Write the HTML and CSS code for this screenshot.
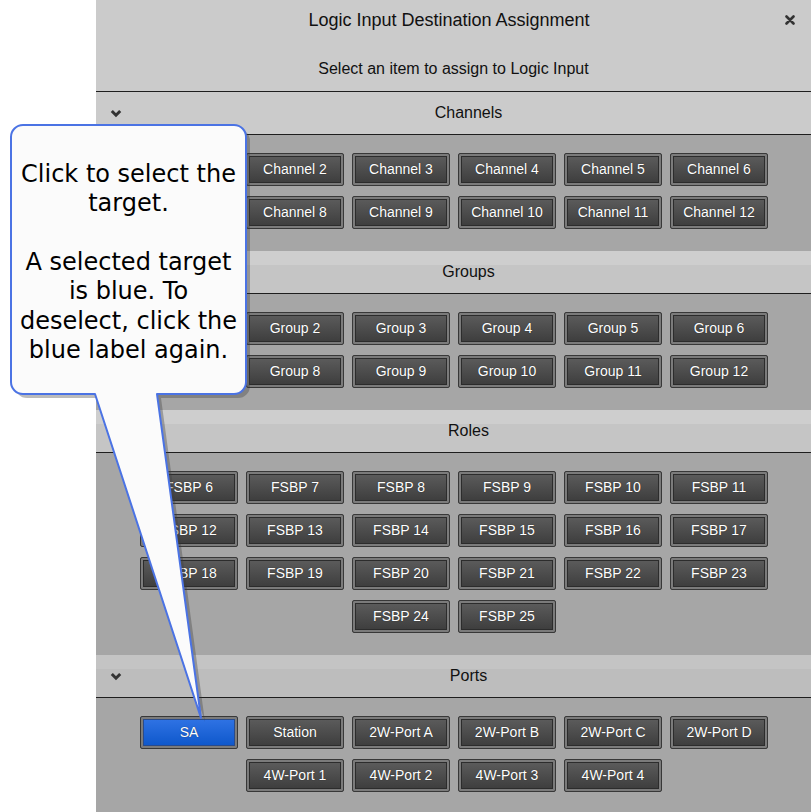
FILE: index.html
```html
<!DOCTYPE html>
<html>
<head>
<meta charset="utf-8">
<link rel="stylesheet" href="styles.css">
</head>
<body>
<div class="page">
  <div class="panel">
    <div class="top">
      <div class="title-row">
        <div class="title">Logic Input Destination Assignment</div>
        <svg class="close" width="10" height="10" viewBox="0 0 10 10"><path d="M1.5 1.5 L8.5 8.5 M8.5 1.5 L1.5 8.5" stroke="#333" stroke-width="2.6" stroke-linecap="round"/></svg>
      </div>
      <div class="subtitle">Select an item to assign to Logic Input</div>
    </div>

    <div class="section">
      <div class="sec-head sec-head-first">
        <span class="chev"><svg width="12" height="9" viewBox="0 0 12 9"><path d="M1.8 2 L6 6.2 L10.2 2" fill="none" stroke="#333" stroke-width="3"/></svg></span>
        <span class="sec-label">Channels</span>
      </div>
      <div class="sec-body">
        <div class="btn">Channel 1</div><div class="btn">Channel 2</div><div class="btn">Channel 3</div><div class="btn">Channel 4</div><div class="btn">Channel 5</div><div class="btn">Channel 6</div>
        <div class="btn">Channel 7</div><div class="btn">Channel 8</div><div class="btn">Channel 9</div><div class="btn">Channel 10</div><div class="btn">Channel 11</div><div class="btn">Channel 12</div>
      </div>
    </div>

    <div class="section">
      <div class="sec-head">
        <span class="chev"><svg width="12" height="9" viewBox="0 0 12 9"><path d="M1.8 2 L6 6.2 L10.2 2" fill="none" stroke="#333" stroke-width="3"/></svg></span>
        <span class="sec-label">Groups</span>
      </div>
      <div class="sec-body">
        <div class="btn">Group 1</div><div class="btn">Group 2</div><div class="btn">Group 3</div><div class="btn">Group 4</div><div class="btn">Group 5</div><div class="btn">Group 6</div>
        <div class="btn">Group 7</div><div class="btn">Group 8</div><div class="btn">Group 9</div><div class="btn">Group 10</div><div class="btn">Group 11</div><div class="btn">Group 12</div>
      </div>
    </div>

    <div class="section">
      <div class="sec-head">
        <span class="chev"><svg width="12" height="9" viewBox="0 0 12 9"><path d="M1.8 2 L6 6.2 L10.2 2" fill="none" stroke="#333" stroke-width="3"/></svg></span>
        <span class="sec-label">Roles</span>
      </div>
      <div class="sec-body">
        <div class="btn">FSBP 6</div><div class="btn">FSBP 7</div><div class="btn">FSBP 8</div><div class="btn">FSBP 9</div><div class="btn">FSBP 10</div><div class="btn">FSBP 11</div>
        <div class="btn">FSBP 12</div><div class="btn">FSBP 13</div><div class="btn">FSBP 14</div><div class="btn">FSBP 15</div><div class="btn">FSBP 16</div><div class="btn">FSBP 17</div>
        <div class="btn">FSBP 18</div><div class="btn">FSBP 19</div><div class="btn">FSBP 20</div><div class="btn">FSBP 21</div><div class="btn">FSBP 22</div><div class="btn">FSBP 23</div>
        <div class="btn">FSBP 24</div><div class="btn">FSBP 25</div>
      </div>
    </div>

    <div class="section">
      <div class="sec-head sec-head-dark">
        <span class="chev"><svg width="12" height="9" viewBox="0 0 12 9"><path d="M1.8 2 L6 6.2 L10.2 2" fill="none" stroke="#333" stroke-width="3"/></svg></span>
        <span class="sec-label">Ports</span>
      </div>
      <div class="sec-body sec-body-last">
        <div class="btn btn-selected">SA</div><div class="btn">Station</div><div class="btn">2W-Port A</div><div class="btn">2W-Port B</div><div class="btn">2W-Port C</div><div class="btn">2W-Port D</div>
        <div class="btn">4W-Port 1</div><div class="btn">4W-Port 2</div><div class="btn">4W-Port 3</div><div class="btn">4W-Port 4</div>
      </div>
    </div>
  </div>

  <svg class="callout-shape" width="260" height="730" viewBox="0 0 260 730">
    <path class="callout-shadow" d="M23 125 H234 A12 12 0 0 1 246 137 V382 A12 12 0 0 1 234 394 H157 L201 718 L95 394 H23 A12 12 0 0 1 11 382 V137 A12 12 0 0 1 23 125 Z" transform="translate(4 4)"/>
    <path class="callout-body" d="M23 125 H234 A12 12 0 0 1 246 137 V382 A12 12 0 0 1 234 394 H157 L201 718 L95 394 H23 A12 12 0 0 1 11 382 V137 A12 12 0 0 1 23 125 Z"/>
  </svg>
  <div class="callout-text">Click to select the<br>target.<br><br>A selected target<br>is blue. To<br>deselect, click the<br>blue label again.</div>
</div>
</body>
</html>
```

FILE: styles.css
```css
html, body {
  margin: 0;
  padding: 0;
  background: #ffffff;
}
.page {
  position: relative;
  width: 811px;
  height: 812px;
  overflow: hidden;
}
.panel {
  margin-left: 96px;
  width: 715px;
  height: 812px;
  background: #a6a6a6;
  font-family: "Liberation Sans", Arial, sans-serif;
}
.top {
  height: 91px;
  background: #cbcbcb;
  border-bottom: 1px solid #1e1e1e;
  display: flex;
  flex-direction: column;
}
.title-row {
  height: 41px;
  display: flex;
  align-items: center;
  justify-content: center;
  position: relative;
}
.title {
  font-size: 18px;
  color: #111;
  margin-right: 9px;
}
.close {
  position: absolute;
  right: 16px;
  top: 15px;
}
.subtitle {
  margin-top: 18px;
  text-align: center;
  font-size: 16px;
  color: #111;
  line-height: 20px;
}
.sec-head {
  height: 42px;
  border-bottom: 1px solid #1e1e1e;
  background: linear-gradient(#cecece 0, #cecece 14px, #c5c5c5 14px, #c5c5c5 100%);
  display: flex;
  align-items: center;
}
.sec-head-first {
  background: #cbcbcb;
}
.sec-head-dark {
  background: linear-gradient(#c4c4c4 0, #c4c4c4 14px, #bdbdbd 14px, #bdbdbd 100%);
}
.chev {
  width: 30px;
  display: flex;
  justify-content: flex-start;
  padding-left: 14px;
  box-sizing: border-box;
}
.sec-label {
  flex: 1;
  text-align: center;
  font-size: 16px;
  color: #111;
}
.sec-body {
  display: flex;
  flex-wrap: wrap;
  justify-content: center;
  gap: 10px 8px;
  padding: 18px 43px 22px 44px;
}
.sec-body-last {
  padding-bottom: 20px;
}
.btn {
  width: 98px;
  height: 33px;
  box-sizing: border-box;
  border: 1px solid #383838;
  border-radius: 2px;
  box-shadow: inset 0 0 0 2px #7b7b7b, inset 0 0 0 3px #2c2c2c;
  background: linear-gradient(#5e5e5e, #3b3b3b);
  color: #ffffff;
  font-size: 14px;
  line-height: 16px;
  padding-bottom: 1px;
  display: flex;
  align-items: center;
  justify-content: center;
  text-shadow: 0 0 1px rgba(0,0,0,0.6);
}
.btn-selected {
  background: linear-gradient(#3275e6, #0b55c9);
  box-shadow: inset 0 0 0 2px #7b7b7b, inset 0 0 0 3px #2a4b8a;
}
.callout-shape {
  position: absolute;
  left: 0;
  top: 0;
}
.callout-shadow {
  fill: rgba(60, 60, 60, 0.35);
}
.callout-body {
  fill: #fbfbfb;
  stroke: #4b73e4;
  stroke-width: 2;
  stroke-linejoin: round;
}
.callout-text {
  position: absolute;
  left: 12px;
  top: 129px;
  width: 233px;
  height: 267px;
  display: flex;
  align-items: center;
  justify-content: center;
  text-align: center;
  white-space: nowrap;
  font-family: "DejaVu Sans", Verdana, sans-serif;
  font-size: 24px;
  line-height: 29.4px;
  color: #000;
}
```
